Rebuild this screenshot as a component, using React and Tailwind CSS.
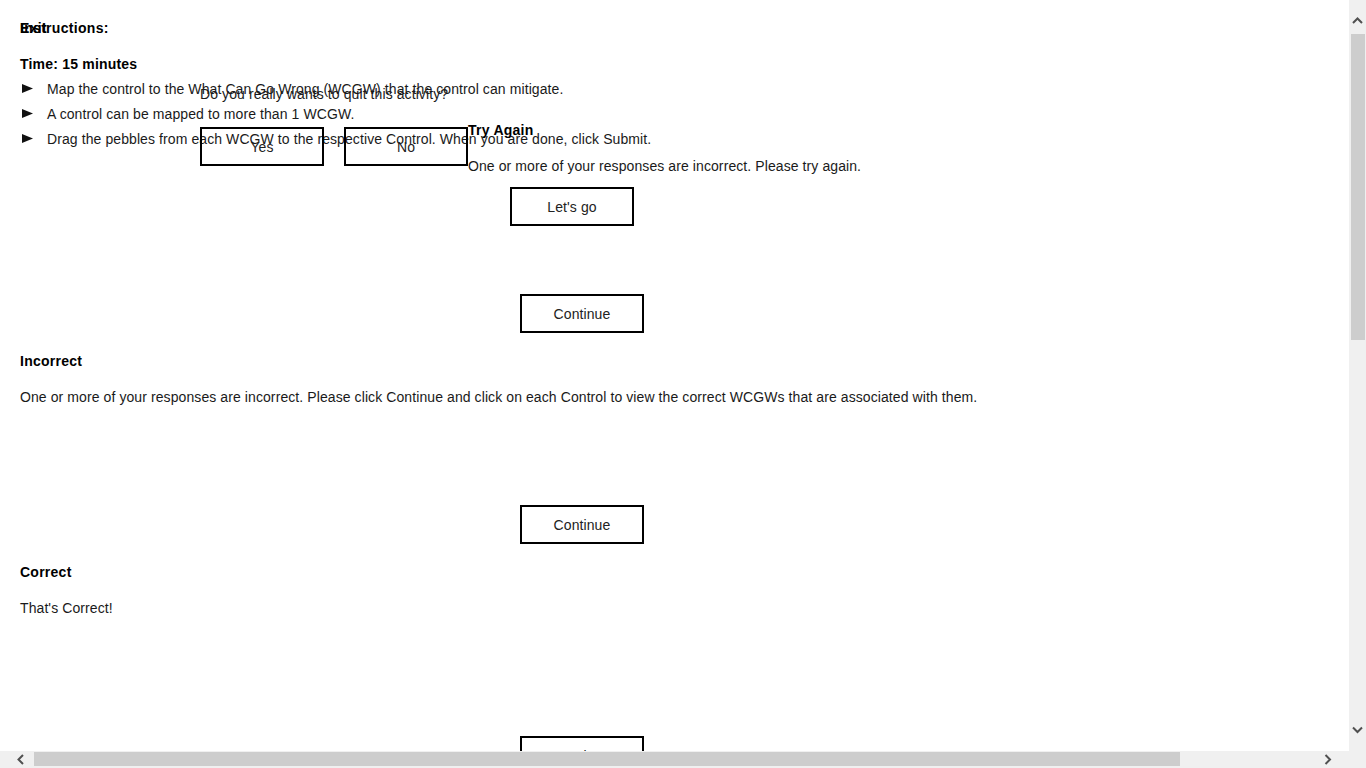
import React from "react";

function Chevron({ dir }) {
  const pts = {
    up: "1,6 5.5,1.5 10,6",
    down: "1,1.5 5.5,6 10,1.5",
    left: "6,1 1.5,5.5 6,10",
    right: "1.5,1 6,5.5 1.5,10",
  }[dir];
  const vertical = dir === "up" || dir === "down";
  return (
    <svg width={vertical ? 11 : 8} height={vertical ? 8 : 11} viewBox={vertical ? "0 0 11 8" : "0 0 8 11"}>
      <polyline points={pts} fill="none" stroke="#505050" strokeWidth="2" />
    </svg>
  );
}

function Btn({ children, className = "" }) {
  return (
    <div
      className={
        "flex h-[39px] w-[124px] items-center justify-center border-2 border-black bg-transparent text-[14px] text-[#222] " +
        className
      }
    >
      {children}
    </div>
  );
}

function Bullet({ children }) {
  return (
    <div className="flex h-[25px] items-center">
      <svg width="11" height="9" viewBox="0 0 11 9" className="ml-[2px] mr-[14px]">
        <polygon points="0,0 11,4.5 0,9" fill="#111" />
      </svg>
      <span>{children}</span>
    </div>
  );
}

export default function App() {
  return (
    <div className="flex h-[768px] w-[1366px] flex-col overflow-hidden bg-white font-['Liberation_Sans',Arial,sans-serif] text-[14px] leading-[16px] tracking-[0.09px] text-[#1a1a1a]">
      <div className="flex h-[751px]">
        {/* content */}
        <div className="relative h-[751px] w-[1349px] overflow-hidden">
          <div className="flex flex-col pl-[20px] pt-[20px]">
            <div className="font-bold tracking-[0.3px] text-black">Instructions:</div>
            <div className="mt-[20px] font-bold tracking-[0.2px] text-black">Time: 15 minutes</div>
            <div className="mt-[4px] flex flex-col">
              <Bullet>Map the control to the What Can Go Wrong (WCGW) that the control can mitigate.</Bullet>
              <Bullet>A control can be mapped to more than 1 WCGW.</Bullet>
              <Bullet>Drag the pebbles from each WCGW to the respective Control. When you are done, click Submit.</Bullet>
            </div>
            <Btn className="ml-[500px] mt-[143px]">Continue</Btn>

            <div className="mt-[20px] font-bold tracking-[0.25px] text-black">Incorrect</div>
            <div className="mt-[20px]">
              One or more of your responses are incorrect. Please click Continue and click on each Control to view the correct WCGWs that are associated with them.
            </div>
            <Btn className="ml-[500px] mt-[100px]">Continue</Btn>

            <div className="mt-[20px] font-bold tracking-[0.25px] text-black">Correct</div>
            <div className="mt-[20px]">That's Correct!</div>
            <Btn className="ml-[500px] mt-[120px]">Continue</Btn>
          </div>

          {/* Exit overlay */}
          <div className="absolute left-[20px] top-[20px] font-bold tracking-[0.3px] text-black">Exit</div>

          {/* Quit dialog overlay */}
          <div className="absolute left-[200px] top-[86px] flex flex-col">
            <div>Do you really wants to quit this activity?</div>
            <div className="mt-[25px] flex gap-[20px]">
              <Btn>Yes</Btn>
              <Btn>No</Btn>
            </div>
          </div>

          {/* Try again overlay */}
          <div className="absolute left-[468px] top-[122px] flex flex-col">
            <div className="font-bold tracking-[0.25px] text-black">Try Again</div>
            <div className="mt-[20px]">One or more of your responses are incorrect. Please try again.</div>
            <Btn className="ml-[42px] mt-[13px]">Let's go</Btn>
          </div>
        </div>

        {/* vertical scrollbar */}
        <div className="flex h-[751px] w-[17px] flex-col bg-[#f0f0f0]">
          <div className="flex h-[34px] items-center justify-center pt-[8px]">
            <Chevron dir="up" />
          </div>
          <div className="ml-[2px] h-[306px] w-[14px] bg-[#cdcdcd]" />
          <div className="flex-1" />
          <div className="flex h-[34px] items-center justify-center pb-[9px]">
            <Chevron dir="down" />
          </div>
        </div>
      </div>

      {/* horizontal scrollbar */}
      <div className="flex h-[17px] bg-[#f0f0f0]">
        <div className="flex w-[34px] items-center justify-center pl-[8px]">
          <Chevron dir="left" />
        </div>
        <div className="mt-[1px] h-[14px] w-[1146px] bg-[#cdcdcd]" />
        <div className="flex-1" />
        <div className="flex w-[34px] items-center justify-center pr-[8px]">
          <Chevron dir="right" />
        </div>
        <div className="w-[17px]" />
      </div>
    </div>
  );
}
